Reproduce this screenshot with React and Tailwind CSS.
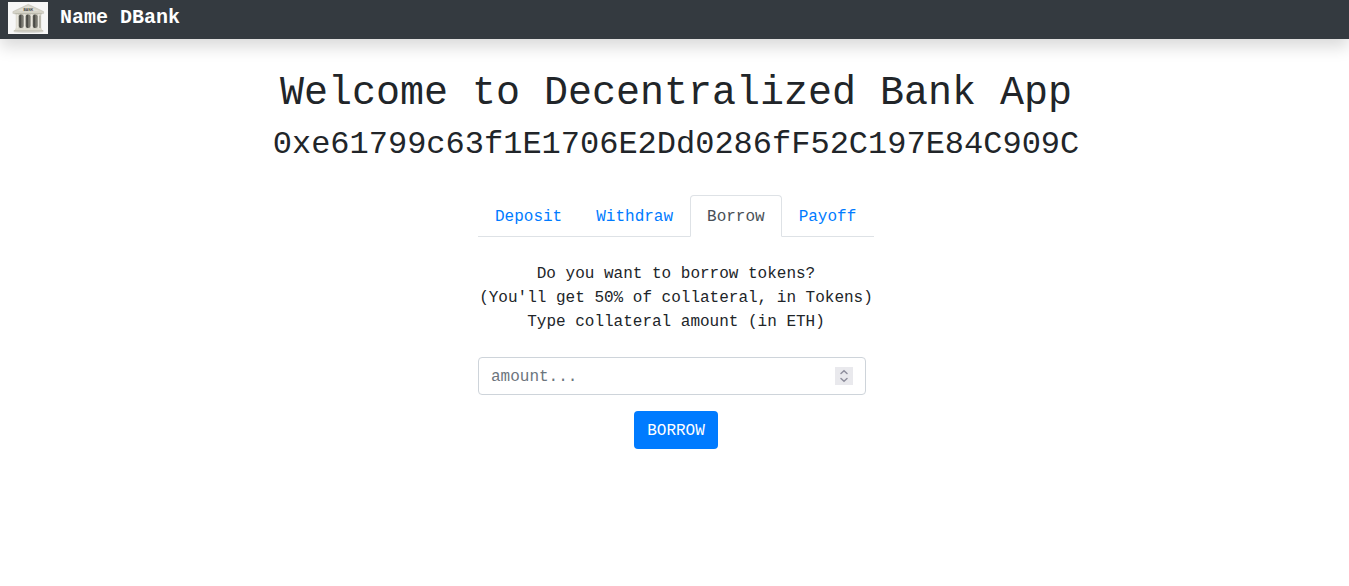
import React, { useRef, useState } from "react";

const TABS = [
  {
    name: "Deposit",
    action: "DEPOSIT",
    lines: ["How much do you want to deposit?", "(min. amount is 0.01 ETH)"],
  },
  {
    name: "Withdraw",
    action: "WITHDRAW",
    lines: ["Do you want to withdraw + take interest?"],
  },
  {
    name: "Borrow",
    action: "BORROW",
    lines: [
      "Do you want to borrow tokens?",
      "(You'll get 50% of collateral, in Tokens)",
      "Type collateral amount (in ETH)",
    ],
  },
  { name: "Payoff", action: "PAYOFF", lines: ["Do you want to payoff the loan?"] },
];

function BankLogo() {
  return (
    <svg viewBox="0 0 40 32" className="h-8 w-10 shrink-0" aria-hidden="true">
      <defs>
        <linearGradient id="shade" x1="0" x2="1" y1="0" y2="0">
          <stop offset="0" stopColor="#5c5c56" />
          <stop offset="0.4" stopColor="#4a4a45" />
          <stop offset="0.7" stopColor="#85847b" />
          <stop offset="1" stopColor="#5c5c56" />
        </linearGradient>
      </defs>
      <rect width="40" height="32" fill="#f7f7f7" />
      <ellipse cx="20.5" cy="29.8" rx="15" ry="1" fill="#d2d2cd" />
      <path d="M7.8 11h25.4v17H7.8z" fill="#d3d1c6" />
      <path d="M20.3 2.3 35.6 9.6v1.8H4.9V9.6z" fill="#d6d4c9" stroke="#bdbbb0" strokeWidth="0.5" />
      <path d="M20.3 4 31 9H9.6z" fill="#e0ded5" />
      <text x="20.3" y="9.4" textAnchor="middle" className="fill-[#3f3f3b] font-['Liberation_Sans'] text-[3.4px] font-bold">
        BANK
      </text>
      <path d="M6.5 11.8h27.6" stroke="#b3b1a5" strokeWidth="0.7" />
      {[8.4, 15.6, 22.8, 30].map((x) => (
        <rect key={x} x={x} y="12.3" width="1.8" height="14.5" fill="#e9e7de" />
      ))}
      {[10.8, 17.7, 24.8].map((x) => (
        <rect key={x} x={x} y="12.6" width="4.7" height="13.4" rx="2" fill="url(#shade)" />
      ))}
      <path d="M31.9 13.5v12.5" stroke="#8a897f" strokeWidth="0.8" />
      <path d="M7 26.6h27v1.4H7z" fill="#dddbcf" />
      <path d="M5.8 28h29.4v1.5H5.8z" fill="#cac8bc" />
    </svg>
  );
}

function AmountField() {
  const input = useRef(null);
  return (
    <div className="mr-2 flex h-[38px] items-center rounded border border-[#ced4da] bg-white pr-3">
      <input
        ref={input}
        type="number"
        step="0.01"
        aria-label="Amount"
        placeholder="amount..."
        className="h-full min-w-0 flex-1 appearance-none bg-transparent pt-0.5 pl-3 text-[#495057] outline-none [-moz-appearance:textfield] placeholder:text-[#6c757d] [&::-webkit-inner-spin-button]:appearance-none"
      />
      <div className="flex h-[18px] w-[18px] flex-col bg-[#e9e9ed] text-[#8f8f9d]">
        <button type="button" aria-label="Increase" className="flex h-[9px] items-end justify-center" onClick={() => input.current.stepUp()}>
          <svg viewBox="0 0 18 9" className="h-[9px] w-[18px]" fill="none" stroke="currentColor" strokeWidth="1.5" strokeLinecap="round">
            <path d="M6 6.5 9 3.8l3 2.7" />
          </svg>
        </button>
        <button type="button" aria-label="Decrease" className="flex h-[9px] items-start justify-center" onClick={() => input.current.stepDown()}>
          <svg viewBox="0 0 18 9" className="h-[9px] w-[18px]" fill="none" stroke="currentColor" strokeWidth="1.5" strokeLinecap="round">
            <path d="M6 2.5 9 5.2l3-2.7" />
          </svg>
        </button>
      </div>
    </div>
  );
}

export default function App() {
  const [active, setActive] = useState(2);
  const tab = TABS[active];

  return (
    <div className="min-h-screen bg-white font-['Liberation_Mono',monospace] text-base text-[#212529]">
      <nav className="flex h-[39px] items-start bg-[#343a40] px-2 pt-0.5 shadow-[0_8px_16px_rgba(0,0,0,0.15)]">
        <a href="#" className="flex gap-3 text-xl leading-8 font-bold text-white">
          <BankLogo />
          Name DBank
        </a>
      </nav>

      <main className="flex flex-col items-center pt-[31px] pl-[3px] text-center">
        <h1 className="mb-2 text-[40px] leading-[48px]">Welcome to Decentralized Bank App</h1>
        <h2 className="text-[32px] leading-[38px]">0xe61799c63f1E1706E2Dd0286fF52C197E84C909C</h2>

        <div className="mt-[31px] min-w-[396px]">
          <div role="tablist" className="flex border-b border-[#dee2e6]">
            {TABS.map(({ name }, i) => (
              <button
                key={name}
                type="button"
                role="tab"
                aria-selected={i === active}
                onClick={() => setActive(i)}
                className={
                  i === active
                    ? "-mb-px rounded-t border border-[#dee2e6] border-b-white bg-white px-4 pt-[9px] pb-[7px] leading-6 text-[#495057]"
                    : "-mb-px rounded-t border border-transparent px-4 pt-[9px] pb-[7px] leading-6 text-[#007bff]"
                }
              >
                {name}
              </button>
            ))}
          </div>

          <form role="tabpanel" className="pt-[25px]" onSubmit={(e) => e.preventDefault()}>
            <div className="mb-[23px] leading-6">
              {tab.lines.map((line) => (
                <p key={line}>{line}</p>
              ))}
            </div>
            <AmountField />
            <button type="submit" className="mt-4 h-[38px] rounded bg-[#007bff] px-[13px] pt-0.5 text-white">
              {tab.action}
            </button>
          </form>
        </div>
      </main>
    </div>
  );
}
